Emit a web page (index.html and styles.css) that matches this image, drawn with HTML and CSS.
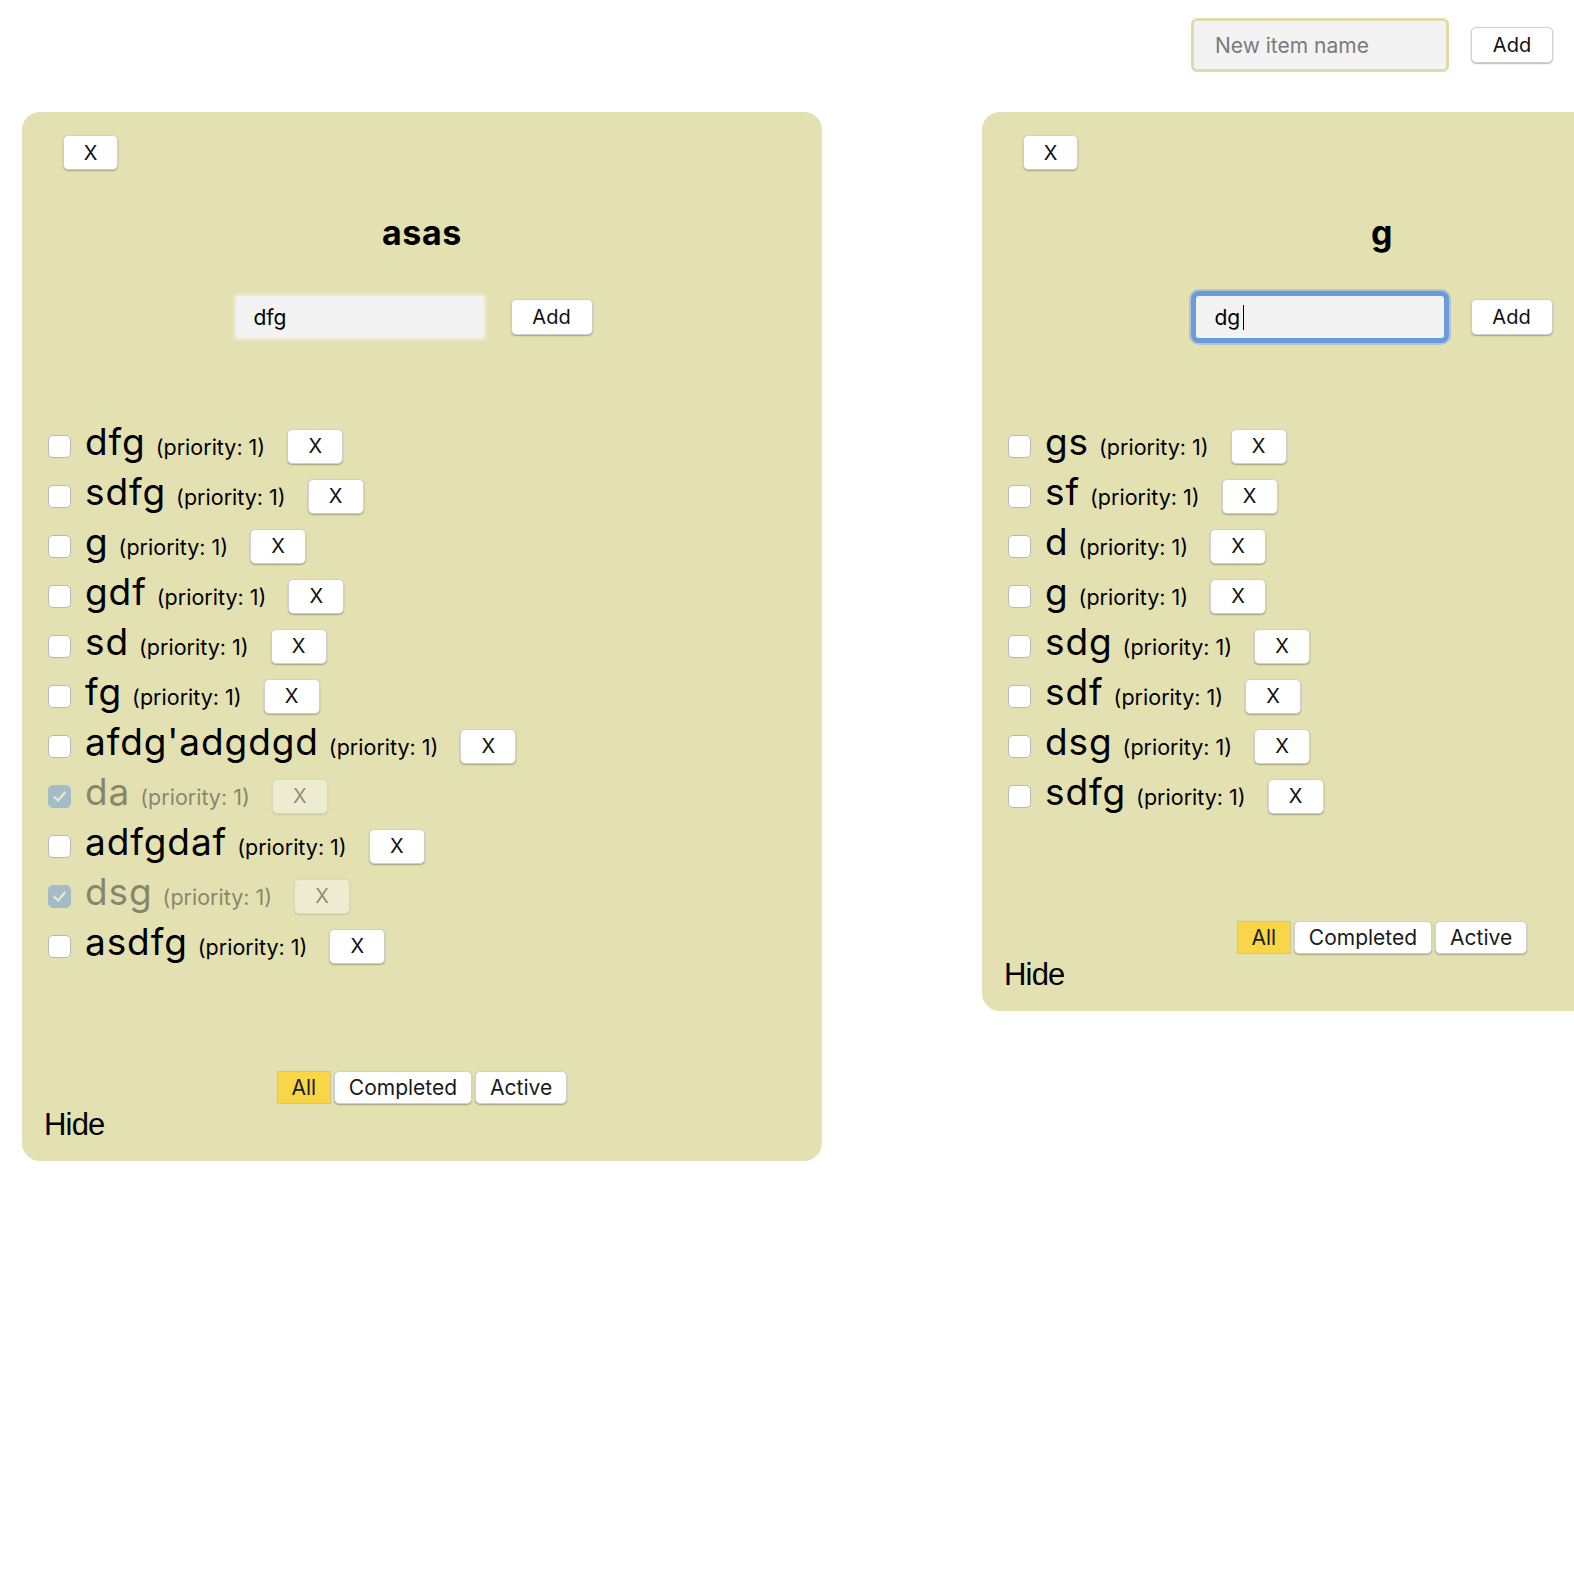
FILE: index.html
```html
<!DOCTYPE html>
<html>
<head>
<meta charset="utf-8">
<link rel="stylesheet" href="styles.css">
</head>
<body>
<div class="topbar">
  <input class="field new-field" placeholder="New item name">
  <button class="btn add-btn">Add</button>
</div>
<div class="lists">
  <section class="panel">
    <div class="panel-top"><button class="btn close-btn">X</button></div>
    <h2 class="title">asas</h2>
    <div class="add-row">
      <span class="field-wrap"><input class="field" value="dfg"></span>
      <button class="btn add-btn">Add</button>
    </div>
    <ul class="items">
      <li class="item"><input type="checkbox" class="check"><span class="label"><span class="name">dfg</span><span class="prio">(priority: 1)</span></span><button class="btn x-btn">X</button></li>
      <li class="item"><input type="checkbox" class="check"><span class="label"><span class="name">sdfg</span><span class="prio">(priority: 1)</span></span><button class="btn x-btn">X</button></li>
      <li class="item"><input type="checkbox" class="check"><span class="label"><span class="name">g</span><span class="prio">(priority: 1)</span></span><button class="btn x-btn">X</button></li>
      <li class="item"><input type="checkbox" class="check"><span class="label"><span class="name">gdf</span><span class="prio">(priority: 1)</span></span><button class="btn x-btn">X</button></li>
      <li class="item"><input type="checkbox" class="check"><span class="label"><span class="name">sd</span><span class="prio">(priority: 1)</span></span><button class="btn x-btn">X</button></li>
      <li class="item"><input type="checkbox" class="check"><span class="label"><span class="name">fg</span><span class="prio">(priority: 1)</span></span><button class="btn x-btn">X</button></li>
      <li class="item"><input type="checkbox" class="check"><span class="label"><span class="name">afdg'adgdgd</span><span class="prio">(priority: 1)</span></span><button class="btn x-btn">X</button></li>
      <li class="item done"><input type="checkbox" class="check" checked><span class="label"><span class="name">da</span><span class="prio">(priority: 1)</span></span><button class="btn x-btn">X</button></li>
      <li class="item"><input type="checkbox" class="check"><span class="label"><span class="name">adfgdaf</span><span class="prio">(priority: 1)</span></span><button class="btn x-btn">X</button></li>
      <li class="item done"><input type="checkbox" class="check" checked><span class="label"><span class="name">dsg</span><span class="prio">(priority: 1)</span></span><button class="btn x-btn">X</button></li>
      <li class="item"><input type="checkbox" class="check"><span class="label"><span class="name">asdfg</span><span class="prio">(priority: 1)</span></span><button class="btn x-btn">X</button></li>
    </ul>
    <div class="filters">
      <button class="fbtn selected">All</button>
      <button class="btn fbtn">Completed</button>
      <button class="btn fbtn">Active</button>
    </div>
    <div class="hide">Hide</div>
  </section>
  <section class="panel">
    <div class="panel-top"><button class="btn close-btn">X</button></div>
    <h2 class="title">g</h2>
    <div class="add-row">
      <span class="field-wrap"><input class="field focused" value="dg"><span class="caret"></span></span>
      <button class="btn add-btn">Add</button>
    </div>
    <ul class="items">
      <li class="item"><input type="checkbox" class="check"><span class="label"><span class="name">gs</span><span class="prio">(priority: 1)</span></span><button class="btn x-btn">X</button></li>
      <li class="item"><input type="checkbox" class="check"><span class="label"><span class="name">sf</span><span class="prio">(priority: 1)</span></span><button class="btn x-btn">X</button></li>
      <li class="item"><input type="checkbox" class="check"><span class="label"><span class="name">d</span><span class="prio">(priority: 1)</span></span><button class="btn x-btn">X</button></li>
      <li class="item"><input type="checkbox" class="check"><span class="label"><span class="name">g</span><span class="prio">(priority: 1)</span></span><button class="btn x-btn">X</button></li>
      <li class="item"><input type="checkbox" class="check"><span class="label"><span class="name">sdg</span><span class="prio">(priority: 1)</span></span><button class="btn x-btn">X</button></li>
      <li class="item"><input type="checkbox" class="check"><span class="label"><span class="name">sdf</span><span class="prio">(priority: 1)</span></span><button class="btn x-btn">X</button></li>
      <li class="item"><input type="checkbox" class="check"><span class="label"><span class="name">dsg</span><span class="prio">(priority: 1)</span></span><button class="btn x-btn">X</button></li>
      <li class="item"><input type="checkbox" class="check"><span class="label"><span class="name">sdfg</span><span class="prio">(priority: 1)</span></span><button class="btn x-btn">X</button></li>
    </ul>
    <div class="filters">
      <button class="fbtn selected">All</button>
      <button class="btn fbtn">Completed</button>
      <button class="btn fbtn">Active</button>
    </div>
    <div class="hide">Hide</div>
  </section>
</div>
</body>
</html>
```
FILE: styles.css
```css
html, body {
  margin: 0;
  padding: 0;
  background: #ffffff;
  overflow: hidden;
}
body {
  font-family: Inter, "Liberation Sans", sans-serif;
  color: #000;
}
.topbar {
  display: flex;
  justify-content: flex-end;
  align-items: center;
  gap: 22px;
  padding: 18px 21px 0 0;
  height: 54px;
}
.field-wrap {
  position: relative;
  display: inline-flex;
}
.field {
  box-sizing: border-box;
  width: 254px;
  height: 48px;
  border: 3px solid #ebe9cb;
  border-radius: 6px;
  background: #f3f3f3;
  font-family: Inter, sans-serif;
  font-size: 21px;
  padding: 0 18px;
  color: #000;
  outline: none;
}
.new-field {
  width: 258px;
  height: 54px;
  border-color: #e0dcaa;
  padding: 0 21px;
}
.new-field::placeholder {
  color: #7b7b7b;
}
.field.focused {
  border: 3px solid #6b9bd9;
  box-shadow: 0 0 0 2px #6b9bd9, 0 0 0 4px #b3c3cf;
  padding: 0 19px;
}
.caret {
  position: absolute;
  left: 50px;
  top: 12px;
  width: 1.5px;
  height: 25px;
  background: #000;
}
.btn {
  font-family: Inter, sans-serif;
  font-size: 20px;
  color: #111;
  background: #fff;
  border: 1px solid #cfcfcf;
  border-radius: 5px;
  box-shadow: 0 1px 1.5px rgba(0, 0, 0, 0.28);
  padding: 0;
  cursor: pointer;
}
.add-btn {
  width: 82px;
  height: 36px;
}
.lists {
  display: flex;
  align-items: flex-start;
  gap: 160px;
  padding: 40px 0 0 22px;
}
.panel {
  flex: 0 0 800px;
  box-sizing: border-box;
  background: #e3e0b2;
  border-radius: 18px;
  padding: 23px 20px 18px 20px;
}
.panel-top {
  display: flex;
  padding-left: 21px;
}
.close-btn {
  width: 55px;
  height: 35px;
}
.title {
  margin: 43px 0 0 0;
  text-align: center;
  font-size: 34px;
  font-weight: 700;
  line-height: 40px;
  letter-spacing: 0.6px;
}
.add-row {
  display: flex;
  justify-content: center;
  align-items: center;
  gap: 24px;
  margin-top: 40px;
  padding-right: 19px;
}
.items {
  list-style: none;
  margin: 80px 0 0 0;
  padding: 0;
}
.item {
  display: flex;
  align-items: center;
  height: 50px;
}
.check {
  appearance: none;
  -webkit-appearance: none;
  box-sizing: border-box;
  width: 23px;
  height: 23px;
  margin: 0 14px 0 6px;
  border: 1px solid #b9b9b9;
  border-radius: 5px;
  background: #fff;
  position: relative;
  flex: 0 0 auto;
}
.check:checked {
  background: #4888ea;
  border-color: #4888ea;
}
.check:checked::after {
  content: "";
  position: absolute;
  left: 7px;
  top: 3px;
  width: 5px;
  height: 10px;
  border: solid #fff;
  border-width: 0 2px 2px 0;
  transform: rotate(40deg);
}
.label {
  display: flex;
  align-items: baseline;
  gap: 10px;
  white-space: nowrap;
  padding-bottom: 8px;
}
.name {
  font-size: 37px;
  line-height: 42px;
  letter-spacing: 0.9px;
}
.prio {
  font-size: 21.5px;
}
.x-btn {
  width: 56px;
  height: 35px;
  margin-left: 22px;
  flex: 0 0 auto;
}
.item.done {
  opacity: 0.4;
}
.filters {
  display: flex;
  justify-content: center;
  gap: 3px;
  margin-top: 100px;
}
.fbtn {
  height: 33px;
  padding: 0 14px;
  font-family: Inter, sans-serif;
  font-size: 21px;
  color: #1a1a1a;
}
.fbtn.selected {
  background: #f8d648;
  border: 1px solid #c9c49a;
  border-radius: 0;
  width: 54px;
  padding: 0;
}
.hide {
  font-family: "Liberation Sans", sans-serif;
  font-size: 31px;
  letter-spacing: -0.8px;
  line-height: 36px;
  margin-top: 3px;
  margin-left: 2px;
}
```
